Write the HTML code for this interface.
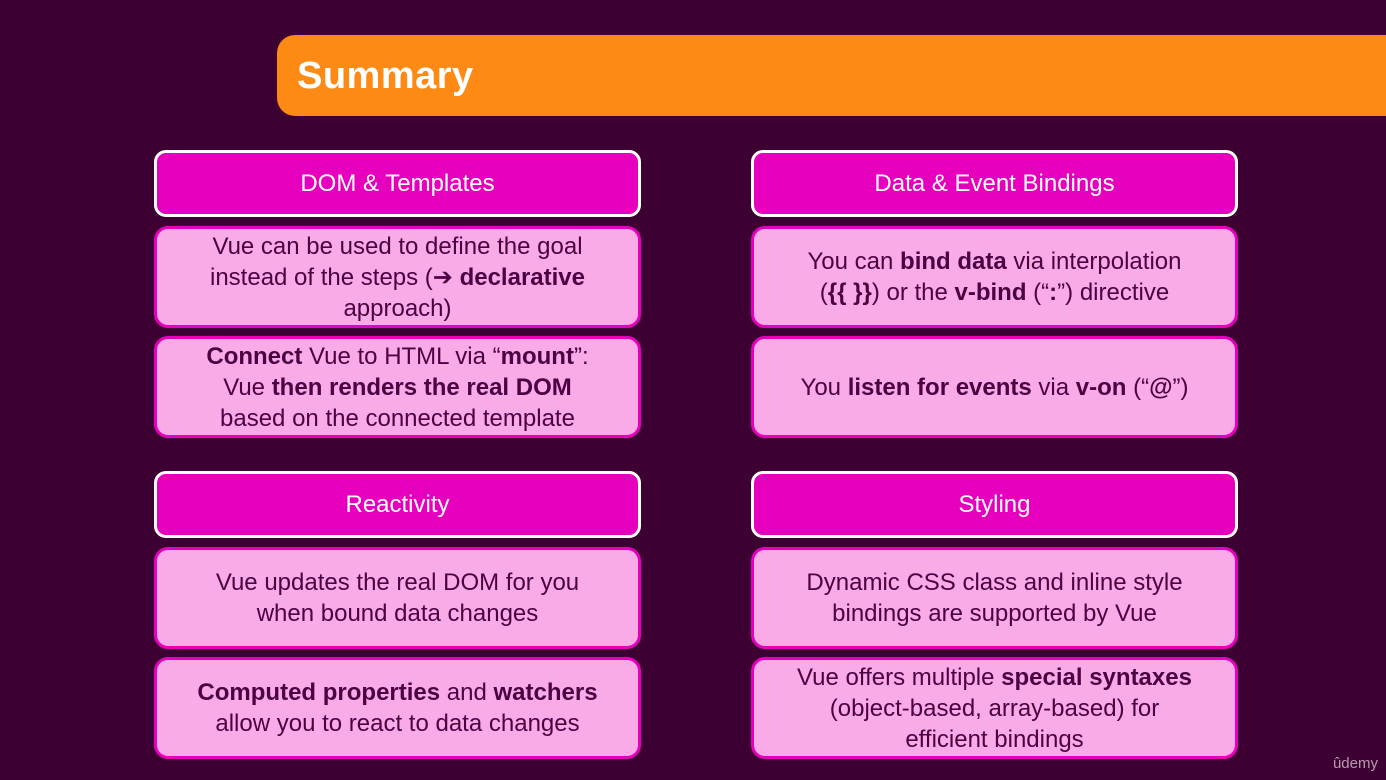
<!DOCTYPE html><html><head><style>
body{margin:0;width:1386px;height:780px;background:#3d0033;position:relative;overflow:hidden;font-family:"Liberation Sans",sans-serif}
.ban{position:absolute;left:277px;top:35px;width:1120px;height:81px;background:#fd8a14;border-radius:18px 0 0 18px}
.ban span{position:absolute;left:20px;top:20px;color:#fff;font-weight:bold;font-size:38px;letter-spacing:0.5px}
.h,.b{position:absolute;box-sizing:border-box;width:487px;display:flex;align-items:center;justify-content:center;text-align:center}
.h{height:67px;background:#e600bd;border:3px solid #fff;border-radius:12px;color:#fff;font-size:24px}
.b{height:102px;background:#fbaae8;border:3px solid #e600bd;border-radius:14px;color:#4a0042;font-size:24px;line-height:31px;padding:0 8px}
b{font-weight:bold}
.u{position:absolute;right:8px;bottom:8px;color:#b89ab2;font-size:15px}
</style></head><body>
<div class="ban"><span>Summary</span></div>
<div class="h" style="left:154px;top:150px">DOM &amp; Templates</div>
<div class="b" style="left:154px;top:226px"><div>Vue can be used to define the goal<br>instead of the steps (➔ <b>declarative</b><br>approach)</div></div>
<div class="b" style="left:154px;top:336px"><div><b>Connect</b> Vue to HTML via “<b>mount</b>”:<br>Vue <b>then renders the real DOM</b><br>based on the connected template</div></div>
<div class="h" style="left:751px;top:150px">Data &amp; Event Bindings</div>
<div class="b" style="left:751px;top:226px"><div>You can <b>bind data</b> via interpolation<br>(<b>{{ }}</b>) or the <b>v-bind</b> (“<b>:</b>”) directive</div></div>
<div class="b" style="left:751px;top:336px"><div>You <b>listen for events</b> via <b>v-on</b> (“<b>@</b>”)</div></div>
<div class="h" style="left:154px;top:471px">Reactivity</div>
<div class="b" style="left:154px;top:547px"><div>Vue updates the real DOM for you<br>when bound data changes</div></div>
<div class="b" style="left:154px;top:657px"><div><b>Computed properties</b> and <b>watchers</b><br>allow you to react to data changes</div></div>
<div class="h" style="left:751px;top:471px">Styling</div>
<div class="b" style="left:751px;top:547px"><div>Dynamic CSS class and inline style<br>bindings are supported by Vue</div></div>
<div class="b" style="left:751px;top:657px"><div>Vue offers multiple <b>special syntaxes</b><br>(object-based, array-based) for<br>efficient bindings</div></div>
<div class="u">ûdemy</div>
</body></html>
